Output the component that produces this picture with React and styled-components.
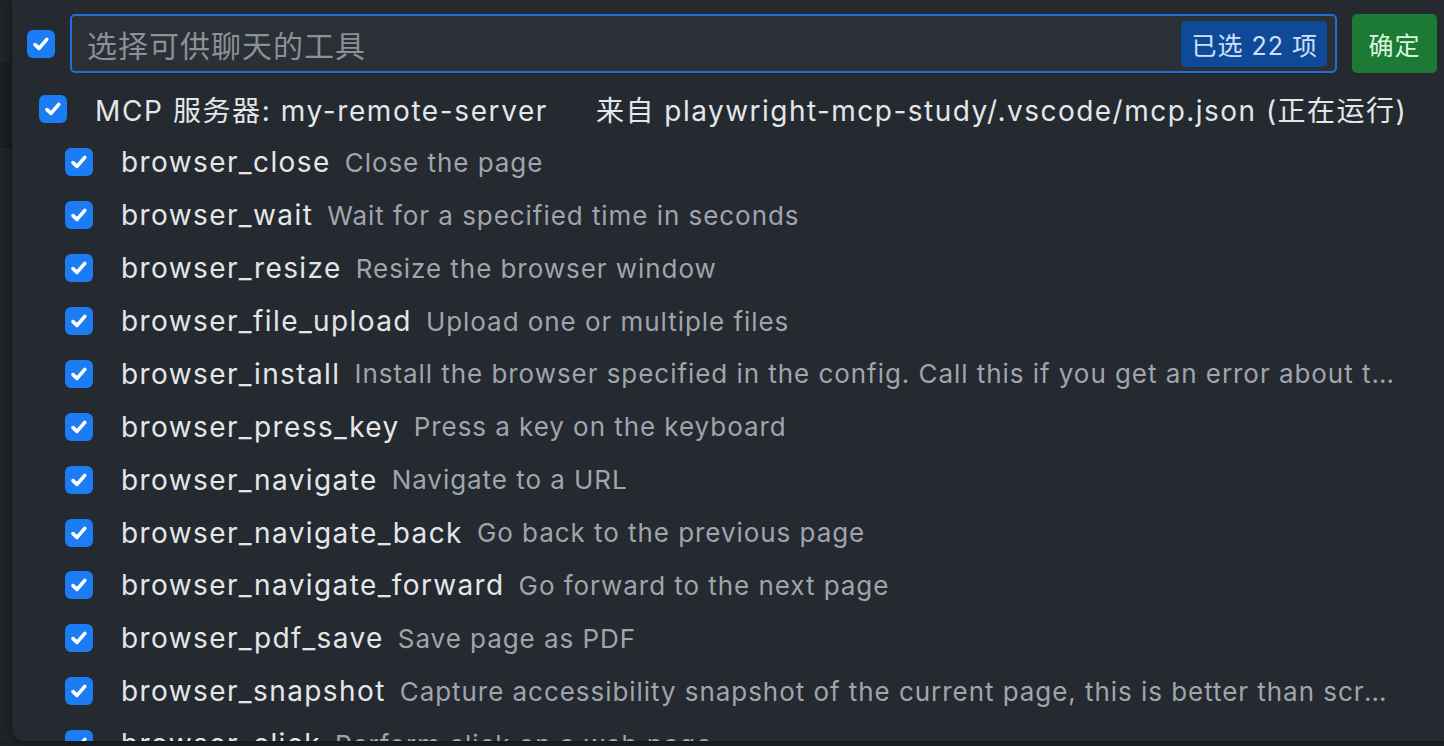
import React from "react";
import styled, { createGlobalStyle } from "styled-components";

const GlobalStyle = createGlobalStyle`
  html, body {
    margin: 0;
    padding: 0;
    background: #1d2025;
    font-family: Inter, "Noto Sans", "Noto Sans CJK SC", sans-serif;
    -webkit-font-smoothing: antialiased;
  }
  #root {
    height: 746px;
    overflow: hidden;
  }
`;

const tools = [
  ["browser_close", "Close the page"],
  ["browser_wait", "Wait for a specified time in seconds"],
  ["browser_resize", "Resize the browser window"],
  ["browser_file_upload", "Upload one or multiple files"],
  [
    "browser_install",
    "Install the browser specified in the config. Call this if you get an error about the browser not being installed."
  ],
  ["browser_press_key", "Press a key on the keyboard"],
  ["browser_navigate", "Navigate to a URL"],
  ["browser_navigate_back", "Go back to the previous page"],
  ["browser_navigate_forward", "Go forward to the next page"],
  ["browser_pdf_save", "Save page as PDF"],
  [
    "browser_snapshot",
    "Capture accessibility snapshot of the current page, this is better than screenshot"
  ],
  ["browser_click", "Perform click on a web page"],
  ["browser_hover", "Hover over element on page"]
];

function Check() {
  return (
    <CheckBox>
      <svg width='20' height='20' viewBox='0 0 20 20'>
        <path
          d='M4 10.6 L8 14.4 L15.8 5.4'
          fill='none'
          stroke='#fff'
          strokeWidth='3.6'
          strokeLinecap='round'
          strokeLinejoin='round'
        />
      </svg>
    </CheckBox>
  );
}

export default function App() {
  return (
    <>
      <GlobalStyle />
      <Screen>
        <EditorEdge>
          <EdgeBlock />
        </EditorEdge>
        <Panel>
          <Header>
            <Check />
            <Filter>
              <Placeholder>选择可供聊天的工具</Placeholder>
              <CountBadge>已选 22 项</CountBadge>
            </Filter>
            <OkButton>确定</OkButton>
          </Header>
          <List>
            <ServerRow>
              <Check />
              <ServerName>MCP 服务器: my-remote-server</ServerName>
              <ServerSource>
                来自 playwright-mcp-study/.vscode/mcp.json (正在运行)
              </ServerSource>
            </ServerRow>
            {tools.map(([name, desc]) => (
              <ToolRow key={name}>
                <Check />
                <ToolName>{name}</ToolName>
                <ToolDesc>{desc}</ToolDesc>
              </ToolRow>
            ))}
          </List>
        </Panel>
      </Screen>
    </>
  );
}

const Screen = styled.div`
  display: flex;
  height: 741px;
  background: #1d2025;
`;
const EditorEdge = styled.div`
  width: 12px;
  flex-shrink: 0;
  padding-top: 62px;
  background: #202328;
`;
const EdgeBlock = styled.div`
  height: 85px;
  background: #1b1e22;
  border-bottom: 1px solid #181a1e;
`;
const Panel = styled.div`
  flex: 1;
  min-width: 0;
  height: 100%;
  overflow: hidden;
  background: #252930;
  border-bottom-left-radius: 12px;
  box-shadow: 0 0 8px rgba(0, 0, 0, 0.5);
  padding: 14px 7px 0 15px;
  box-sizing: border-box;
`;
const Header = styled.div`
  display: flex;
  align-items: center;
  gap: 15px;
  height: 59px;
`;
const CheckBox = styled.span`
  width: 28px;
  height: 28px;
  flex-shrink: 0;
  border-radius: 6px;
  background: #1b7cf4;
  display: flex;
  align-items: center;
  justify-content: center;
`;
const Filter = styled.div`
  flex: 1;
  height: 100%;
  box-sizing: border-box;
  display: flex;
  align-items: center;
  justify-content: space-between;
  border: 2px solid #1f6fd6;
  border-radius: 5px;
  background: #2b2f36;
  padding: 0 8px 0 15px;
`;
const Placeholder = styled.span`
  font-size: 30px;
  letter-spacing: 1px;
  color: #8c9097;
`;
const CountBadge = styled.span`
  background: #0f4a98;
  color: #cfe0fb;
  font-size: 25px;
  letter-spacing: 1px;
  border-radius: 5px;
  height: 46px;
  padding: 0 9px 0 10px;
  display: flex;
  align-items: center;
`;
const OkButton = styled.button`
  width: 85px;
  height: 100%;
  border: none;
  border-radius: 5px;
  background: #1d7a34;
  color: #d6f7dc;
  font-family: inherit;
  font-size: 25px;
  letter-spacing: 1px;
  padding: 0;
`;
const List = styled.div`
  margin-top: 10px;
  display: flex;
  flex-direction: column;
`;
const Row = styled.div`
  display: flex;
  align-items: center;
  height: 52.9px;
  flex-shrink: 0;
  white-space: nowrap;
  min-width: 0;
`;
const ServerRow = styled(Row)`
  padding-left: 12px;
  gap: 28px;
`;
const ServerName = styled.span`
  font-size: 28px;
  letter-spacing: 1.6px;
  color: #e4e6e9;
`;
const ServerSource = styled.span`
  font-size: 28px;
  letter-spacing: 1.47px;
  color: #e4e6e9;
  margin-left: 20px;
`;
const ToolRow = styled(Row)`
  padding-left: 38px;
  padding-right: 41px;
`;
const ToolName = styled.span`
  font-size: 28px;
  letter-spacing: 1.4px;
  color: #e4e6e9;
  margin-left: 28px;
  flex-shrink: 0;
`;
const ToolDesc = styled.span`
  font-size: 26px;
  letter-spacing: 0.95px;
  color: #a0a5ac;
  margin-left: 14px;
  overflow: hidden;
  text-overflow: ellipsis;
  min-width: 0;
`;
